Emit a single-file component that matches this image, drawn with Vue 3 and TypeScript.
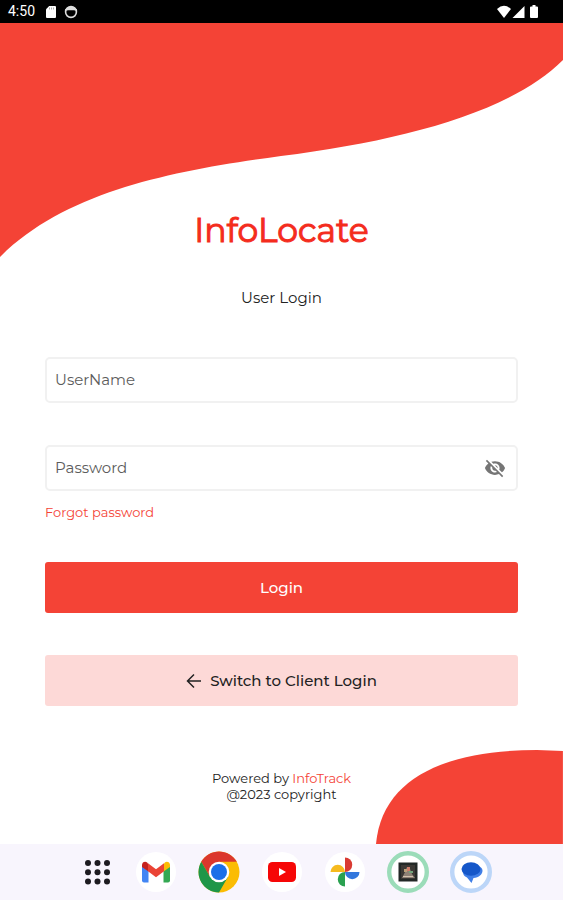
<script setup lang="ts">
import { ref } from 'vue'

const username = ref('')
const password = ref('')
const showPassword = ref(false)
const dots = [0, 1, 2, 3, 4, 5, 6, 7, 8]
</script>

<template>
  <div class="screen">
    <header class="status">
      <time class="clock">4:50</time>
      <svg class="sd" viewBox="0 0 10 12" aria-hidden="true">
        <path d="M3.2 0H9a1 1 0 0 1 1 1v10a1 1 0 0 1-1 1H1a1 1 0 0 1-1-1V3.2z" fill="#fff" />
        <path d="M3.5 1.5v2M5.5 1.5v2M7.5 1.5v2" stroke="#999" stroke-width=".8" />
      </svg>
      <svg class="face" viewBox="0 0 14 14" aria-hidden="true">
        <circle cx="7" cy="7" r="5.4" fill="none" stroke="#ddd" stroke-width="1.6" />
        <path d="M1 4.5Q7-1.5 13 4.5v1H1z" fill="#ddd" />
        <path d="M3.500 6.500h7" stroke="#000" stroke-width="2" />
      </svg>
      <span class="spacer"></span>
      <svg class="signals" viewBox="0 0 44 14" aria-hidden="true">
        <path d="M0 4Q7-2.4 14 4L7 13z" fill="#fff" />
        <path d="M27.500 1v12H15.500z" fill="#fff" />
        <path d="M35.500 0h3v1.500h1.500a1 1 0 0 1 1 1V12a1 1 0 0 1-1 1h-6a1 1 0 0 1-1-1V2.500a1 1 0 0 1 1-1h1.500z" fill="#fff" />
      </svg>
    </header>

    <main class="content">
      <svg class="wave" viewBox="0 0 563 234" preserveAspectRatio="none" aria-hidden="true">
        <path d="M0 0H563V37C510 90 400 118 281 133C180 147 68 166 0 234z" fill="#f44336" />
      </svg>
      <svg class="blob" viewBox="0 0 187 94" preserveAspectRatio="none" aria-hidden="true">
        <path d="M0 94C6 28 70 0 161 0L187 1V94z" fill="#f44336" />
      </svg>

      <form class="form" @submit.prevent>
        <h1 class="title">InfoLocate</h1>
        <h2 class="subtitle">User Login</h2>

        <div class="field">
          <input v-model="username" class="input" type="text" placeholder="UserName" aria-label="UserName" autocomplete="username" />
        </div>
        <div class="field">
          <input v-model="password" class="input" :type="showPassword ? 'text' : 'password'" placeholder="Password" aria-label="Password" autocomplete="current-password" />
          <button class="eye" type="button" aria-label="Toggle password visibility" @click="showPassword = !showPassword">
            <svg viewBox="0 0 24 24" aria-hidden="true">
              <path fill="#757575" d="M12 7c2.760 0 5 2.240 5 5 0 .65-.13 1.260-.36 1.830l2.920 2.920c1.510-1.260 2.700-2.890 3.430-4.750-1.730-4.390-6-7.500-11-7.500-1.400 0-2.740.25-3.980.7l2.160 2.160C10.740 7.130 11.350 7 12 7zM2 4.270l2.280 2.280.46.46C3.080 8.300 1.780 10.020 1 12c1.730 4.390 6 7.500 11 7.500 1.550 0 3.030-.3 4.380-.84l.42.42L19.730 22 21 20.730 3.270 3 2 4.270zM7.530 9.800l1.550 1.550c-.05.21-.08.43-.08.65 0 1.660 1.340 3 3 3 .22 0 .44-.03.65-.08l1.550 1.550c-.67.33-1.410.53-2.200.53-2.760 0-5-2.240-5-5 0-.79.2-1.530.53-2.200zm4.310-.78l3.150 3.150.02-.16c0-1.660-1.340-3-3-3l-.17.01z" />
            </svg>
          </button>
        </div>
        <a class="forgot" href="#">Forgot password</a>

        <button class="button primary" type="submit">Login</button>
        <button class="button secondary" type="button">
          <svg viewBox="0 0 16 16" aria-hidden="true">
            <path d="M15 8H1.500M8 1.500L1.500 8L8 14.500" fill="none" stroke="#222" stroke-width="1.500" />
          </svg>
          Switch to Client Login
        </button>

        <p class="credits">Powered by <a href="#">InfoTrack</a><br />@2023 copyright</p>
      </form>
    </main>

    <nav class="dock" aria-label="Apps">
      <button class="app" type="button" aria-label="All apps">
        <svg viewBox="0 0 42 42">
          <circle v-for="d in dots" :key="d" :cx="16 + (d % 3) * 9.500" :cy="12 + Math.floor(d / 3) * 9.300" r="3" fill="#1d1b20" />
        </svg>
      </button>
      <button class="app" type="button" aria-label="Gmail">
        <svg viewBox="0 0 42 42">
          <circle cx="21" cy="21" r="20" fill="#fff" />
          <path d="M7 15v14.500a2 2 0 0 0 2 2h4.500V19.500z" fill="#4285f4" />
          <path d="M35 15v14.500a2 2 0 0 1-2 2h-4.500V19.500z" fill="#34a853" />
          <path d="M28.500 13.500v7L35 16v-2c0-3-3.200-4.200-5.200-2.500z" fill="#fbbc04" />
          <path d="M13.500 13.500v7L7 16v-2c0-3 3.200-4.200 5.200-2.500z" fill="#c5221f" />
          <path d="M13 12.200l8 6 8-6v8l-8 6-8-6z" fill="#ea4335" />
        </svg>
      </button>
      <button class="app" type="button" aria-label="Chrome">
        <svg viewBox="0 0 42 42">
          <circle cx="21" cy="21" r="20.500" fill="#fbbc04" />
          <path d="M3.250 10.750A20.500 20.500 0 0 1 38.750 10.750H21L12.100 26.100z" fill="#db372d" />
          <path d="M3.250 10.750A20.500 20.500 0 0 0 21 41.500L29.900 26.100L21 21L12.100 26.100z" fill="#1e9648" />
          <circle cx="21" cy="21" r="10.300" fill="#fff" />
          <circle cx="21" cy="21" r="8" fill="#1a6fe8" />
        </svg>
      </button>
      <button class="app" type="button" aria-label="YouTube">
        <svg viewBox="0 0 42 42">
          <circle cx="21" cy="21" r="20" fill="#fff" />
          <rect x="7" y="11" width="28" height="20" rx="4.500" fill="#f60707" />
          <path d="M18 17l7 4-7 4z" fill="#fff" />
        </svg>
      </button>
      <button class="app" type="button" aria-label="Photos">
        <svg viewBox="0 0 42 42">
          <circle cx="21" cy="21" r="20" fill="#fff" />
          <path d="M21 6.500a7.200 7.200 0 0 1 0 14.500z" fill="#d93a32" />
          <path d="M35.500 21a7.200 7.200 0 0 1-14.500 0z" fill="#3277dd" />
          <path d="M21 35.500a7.200 7.200 0 0 1 0-14.500z" fill="#2aa150" />
          <path d="M6.500 21a7.200 7.200 0 0 1 14.500 0z" fill="#f6ba1e" />
        </svg>
      </button>
      <button class="app" type="button" aria-label="Gallery">
        <svg viewBox="0 0 42 42">
          <circle cx="21" cy="21" r="18.800" fill="#fff" stroke="#9bdcb9" stroke-width="4.400" />
          <rect x="11.500" y="11.500" width="19" height="19" fill="#222826" />
          <rect x="14" y="14" width="14" height="14" fill="#3b3834" />
          <path d="M15 27l3-6 2-5 3 2 2 5 3 4z" fill="#8d8175" />
          <path d="M17 18h3v3h-3z" fill="#b9a078" />
          <path d="M20 16h3v4h-3z" fill="#cf7c69" />
          <path d="M22 20h4v2h-4z" fill="#71a47b" />
          <path d="M16 25h10v1H16z" fill="#d2c2ae" />
        </svg>
      </button>
      <button class="app" type="button" aria-label="Messages">
        <svg viewBox="0 0 42 42">
          <circle cx="21" cy="21" r="18.800" fill="#fff" stroke="#bcd6f8" stroke-width="4.400" />
          <path d="M14 17C17 12 32 13 32.500 19.500C32.500 23.500 29 26.500 23.500 27L21.500 32L17 26.500C13 25 12 21 14 17z" fill="#3f7ee6" />
          <ellipse cx="21" cy="18" rx="9.500" ry="6.700" fill="#1557c9" />
        </svg>
      </button>
    </nav>
  </div>
</template>

<style>
body {
  margin: 0;
  background: #fff;
}
</style>

<style scoped>
.screen {
  display: flex;
  flex-direction: column;
  min-height: 100vh;
  font-family: Montserrat, Inter, "Liberation Sans", sans-serif;
  color: #222;
}

.status {
  display: flex;
  align-items: center;
  height: 23px;
  padding: 0 22px 0 8px;
  background: #000;
  color: #fff;
}

.clock {
  font: 14px/23px Roboto, sans-serif;
}

.sd {
  width: 10px;
  height: 12px;
  margin-left: 11px;
}

.face {
  width: 14px;
  height: 14px;
  margin-left: 8px;
}

.spacer {
  flex: 1;
}

.signals {
  width: 44px;
  height: 14px;
}

.content {
  position: relative;
  flex: 1;
  display: flex;
  flex-direction: column;
}

.wave {
  position: absolute;
  top: 0;
  left: 0;
  width: 100%;
  height: 234px;
}

.blob {
  position: absolute;
  right: 0;
  bottom: 0;
  width: 33.2%;
  height: 94px;
}

.form {
  position: relative;
  display: flex;
  flex-direction: column;
  padding: 187px 45px 42px;
}

.title {
  margin: 0;
  font-size: 33px;
  line-height: 40px;
  font-weight: 400;
  text-align: center;
  color: #f42c1d;
  -webkit-text-stroke: 1px #f42c1d;
}

.subtitle {
  margin: 38px 0 7px;
  font-size: 15px;
  line-height: 20px;
  font-weight: 400;
  text-align: center;
}

.field {
  display: flex;
  align-items: center;
  box-sizing: border-box;
  height: 46px;
  margin-top: 42px;
  border: 2px solid #f1f1f1;
  border-radius: 5px;
  background: #fff;
}

.input {
  flex: 1;
  min-width: 0;
  height: 100%;
  box-sizing: border-box;
  padding: 0 8px 2px;
  border: 0;
  outline: 0;
  background: none;
  font: inherit;
  font-size: 15px;
  color: #222;
}

.input::placeholder {
  color: #5c5c5c;
  opacity: 1;
}

.eye {
  display: flex;
  padding: 0;
  margin-right: 10px;
  border: 0;
  background: none;
}

.eye svg {
  width: 22px;
  height: 22px;
}

.forgot {
  align-self: flex-start;
  margin-top: 12px;
  font-size: 13px;
  line-height: 18px;
  color: #f44336;
  text-decoration: none;
}

.button {
  display: flex;
  align-items: center;
  justify-content: center;
  gap: 8px;
  height: 51px;
  padding: 0;
  border: 0;
  border-radius: 3px;
  font: inherit;
  font-size: 15px;
  font-weight: 500;
}

.button svg {
  width: 16px;
  height: 16px;
}

.primary {
  margin-top: 41px;
  background: #f44336;
  color: #fff;
}

.secondary {
  margin-top: 42px;
  background: #fdd9d7;
  color: #222;
}

.credits {
  margin: 64px 0 0;
  font-size: 13px;
  line-height: 16px;
  text-align: center;
}

.credits a {
  color: #f44336;
  text-decoration: none;
}

.dock {
  display: flex;
  align-items: center;
  justify-content: center;
  gap: 21px;
  height: 56px;
  padding: 0 8px;
  background: #f8f5fd;
}

.app {
  display: flex;
  padding: 0;
  border: 0;
  background: none;
}

.app svg {
  width: 42px;
  height: 42px;
}
</style>
